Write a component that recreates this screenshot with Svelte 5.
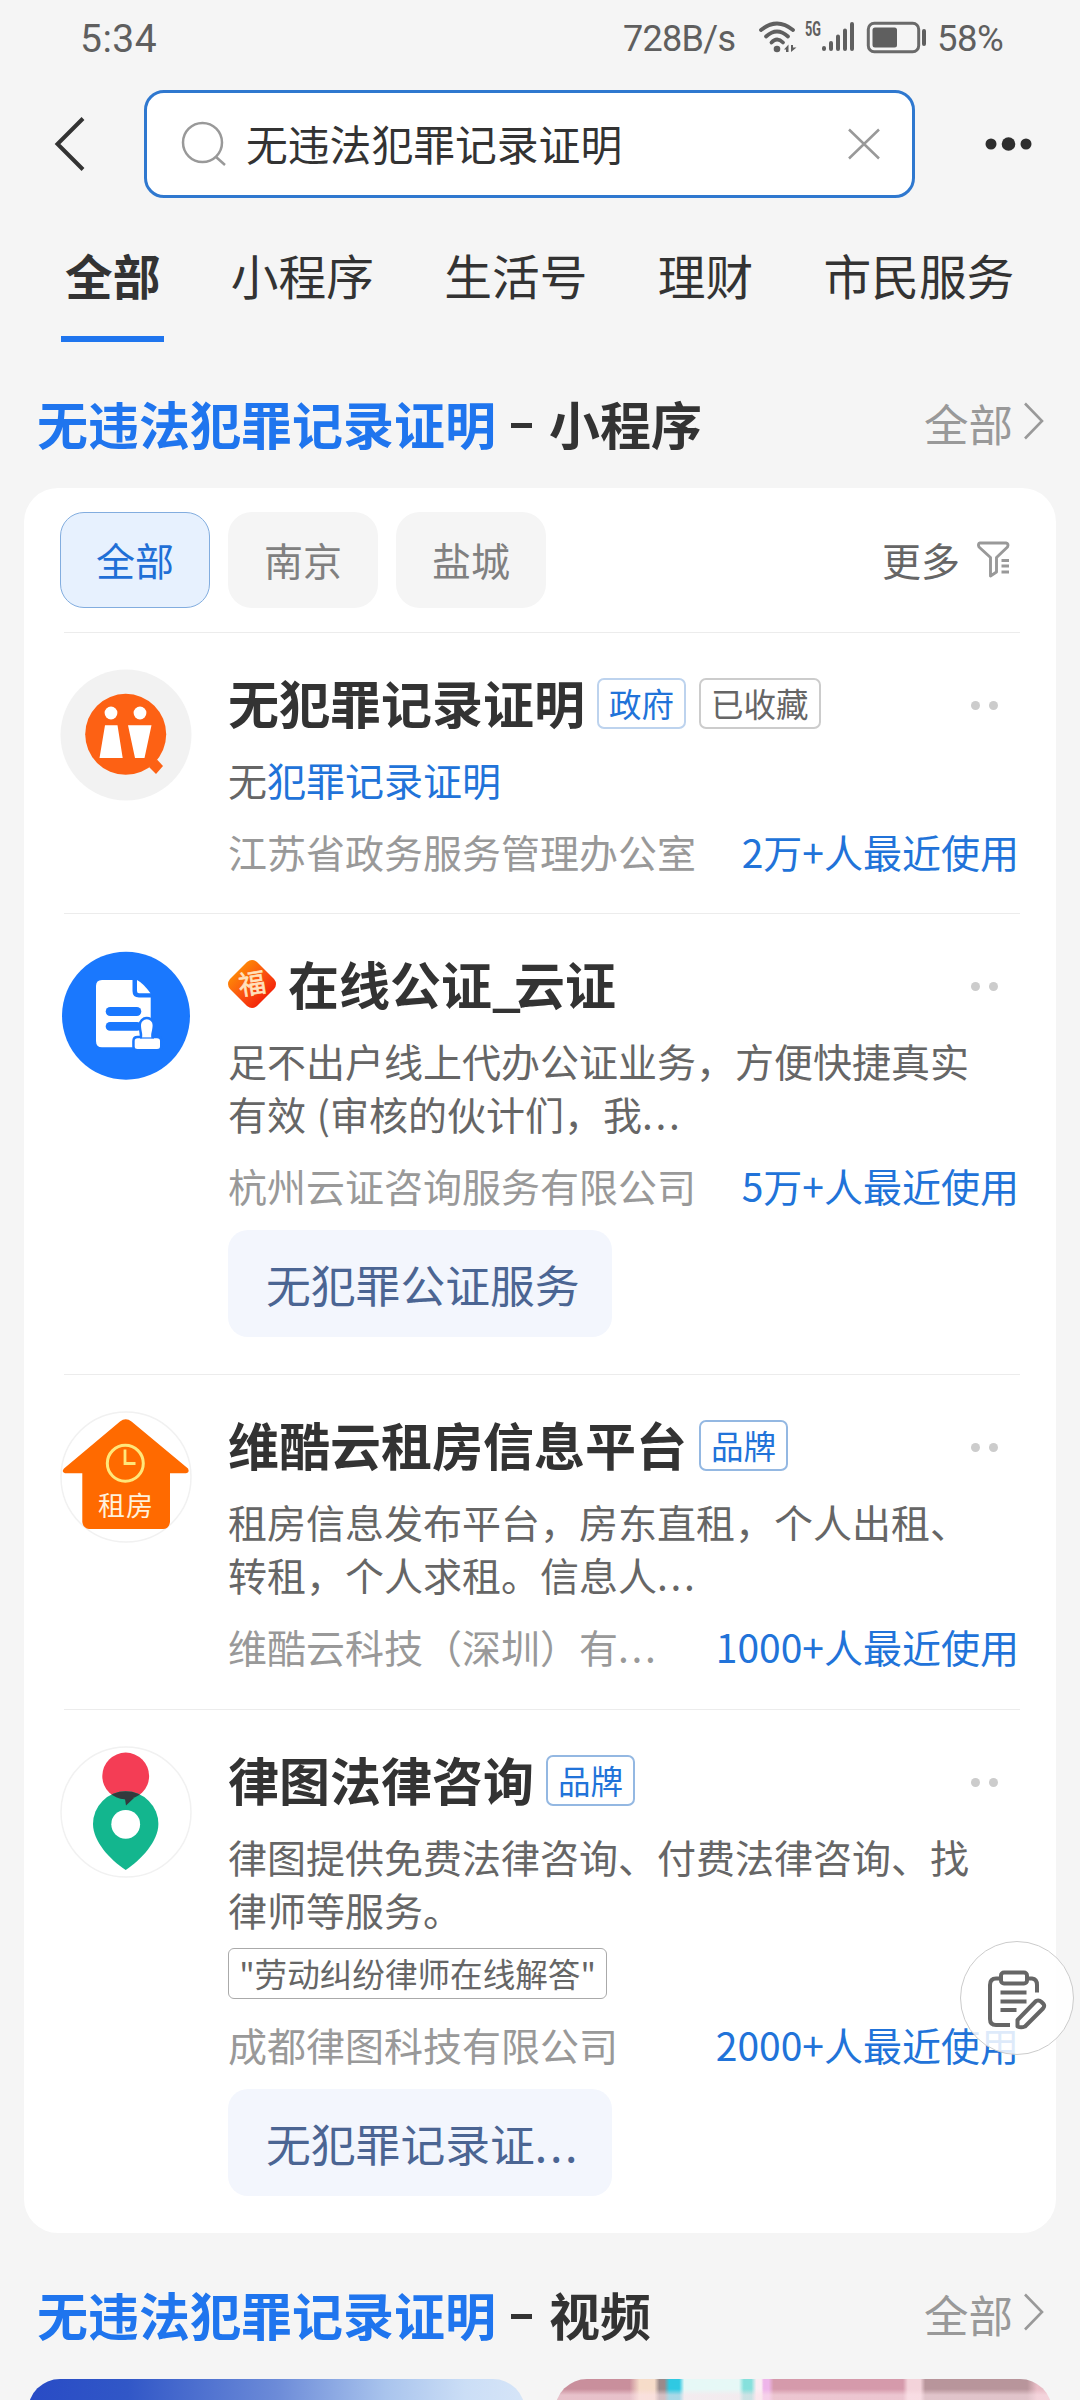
<script>
  const tabs = ['全部', '小程序', '生活号', '理财', '市民服务'];
  const chips = ['全部', '南京', '盐城'];
  const query = '无违法犯罪记录证明';

  const items = [
    {
      icon: 'people',
      title: ['无犯罪记录证明'],
      tags: [{ text: '政府', kind: 'blue' }, { text: '已收藏', kind: 'grey' }],
      lines: [{ text: '无', mark: '犯罪记录证明' }],
      company: '江苏省政务服务管理办公室',
      usage: '2万+人最近使用'
    },
    {
      icon: 'notary',
      emblem: true,
      title: ['在线公证', '_', '云证'],
      tags: [],
      lines: [{ text: '足不出户线上代办公证业务，方便快捷真实' }, { text: '有效 (审核的伙计们，我', more: true }],
      company: '杭州云证咨询服务有限公司',
      usage: '5万+人最近使用',
      action: '无犯罪公证服务'
    },
    {
      icon: 'house',
      title: ['维酷云租房信息平台'],
      tags: [{ text: '品牌', kind: 'brand' }],
      lines: [{ text: '租房信息发布平台，房东直租，个人出租、' }, { text: '转租，个人求租。信息人', more: true }],
      company: '维酷云科技（深圳）有',
      companyMore: true,
      usage: '1000+人最近使用'
    },
    {
      icon: 'pin',
      title: ['律图法律咨询'],
      tags: [{ text: '品牌', kind: 'brand' }],
      lines: [{ text: '律图提供免费法律咨询、付费法律咨询、找' }, { text: '律师等服务。' }],
      quote: '"劳动纠纷律师在线解答"',
      company: '成都律图科技有限公司',
      usage: '2000+人最近使用',
      action: '无犯罪记录证',
      actionMore: true
    }
  ];
</script>

{#snippet sectionHead(name)}
  <div class="section-head">
    <h2><em>{query}</em><i class="dash"></i>{name}</h2>
    <span class="all">全部
      <svg width="23" height="40" viewBox="0 0 23 40"><path d="M3 2.500 L20 20 L3 37.500" fill="none" stroke="#999" stroke-width="2.600" /></svg>
    </span>
  </div>
{/snippet}

{#snippet avatar(kind)}
  <svg class="avatar" width="132" height="132" viewBox="0 0 132 132">
    {#if kind === 'people'}
      <circle cx="66" cy="66" r="65.500" fill="#f2f2f2" />
      <circle cx="65.700" cy="65.300" r="40.500" fill="#fd6114" />
      <path d="M89 98 L97 90.500 L103 97 L96 105 Z" fill="#fd6114" />
      <circle cx="51" cy="44" r="6.400" fill="#fff" />
      <circle cx="80" cy="44" r="6.400" fill="#fff" />
      <path d="M45 56.300 H57.500 L62.700 89 H39.500 Z M68 56.300 H91.500 L84.500 89 H75 Z" fill="#fff" />
    {:else if kind === 'notary'}
      <circle cx="66" cy="65.700" r="64" fill="#1a78fe" />
      <path d="M42 30 H72.500 V41 Q72.500 47.500 79 47.500 H90.700 V97.300 H42 Q36 97.300 36 91 V36 Q36 30 42 30 Z" fill="#fff" />
      <path d="M77 30 Q83 33 90.500 43.300 H79 Q77 43.300 77 41 Z" fill="#fff" />
      <rect x="45.700" y="57" width="35.600" height="9" rx="4.500" fill="#1a78fe" />
      <rect x="45.700" y="72" width="35.600" height="8.700" rx="4.300" fill="#1a78fe" />
      <path d="M82 88.300 C83 83 81 81 81 75 A5.800 5.800 0 0 1 92.600 75 C92.600 81 90.500 83 91.500 88.300 H97 Q100 88.300 100 91 V96.500 Q100 99 97 99 H77.500 Q74.700 99 74.700 96.500 V91 Q74.700 88.300 77.500 88.300 Z" fill="#fff" stroke="#1a78fe" stroke-width="5" paint-order="stroke" />
      <path d="M80 88 H94" stroke="#1a78fe" stroke-width="1.200" />
    {:else if kind === 'house'}
      <circle cx="66" cy="66" r="65" fill="#fff" stroke="#f1f1f1" stroke-width="1.500" />
      <path d="M60 10.500 Q65.700 6 71.500 10.500 L128 57.500 Q130 62 126 62.300 H110 V111 Q109 118 103 118 H29 Q23 117 22.300 111 V62.300 H5 Q1 61 4 57.500 Z" fill="#ff6a00" />
      <circle cx="65.300" cy="52.300" r="18" fill="none" stroke="#ffe77a" stroke-width="3" />
      <path d="M65 38.500 V52.500 H75.500" fill="none" stroke="#ffe77a" stroke-width="2.800" />
      <text x="66" y="105" text-anchor="middle" font-size="27" letter-spacing="1" fill="#fff1dc">租房</text>
    {:else}
      <circle cx="66" cy="66" r="65" fill="#fff" stroke="#f1f1f1" stroke-width="1.500" />
      <clipPath id="head-clip"><circle cx="65.700" cy="30" r="23.400" /></clipPath>
      <circle cx="65.700" cy="30" r="23.400" fill="#f43d55" />
      <path d="M65.700 124 C50 114 33 95 33 78 A32.700 32.700 0 0 1 98.400 78 C98.400 95 81 114 65.700 124 Z" fill="#13b68e" />
      <circle cx="65.700" cy="78" r="32.700" fill="#333a3d" clip-path="url(#head-clip)" />
      <path d="M58 52 H74 L66 59.500 L65 53 Z" fill="#333a3d" />
      <circle cx="65.700" cy="78.300" r="14.400" fill="#fff" />
    {/if}
  </svg>
{/snippet}

<div class="screen">
  <header class="status">
    <span class="clock">5:34</span>
    <span class="speed">728B/s</span>
    <svg class="signals" width="175" height="40" viewBox="0 0 175 40">
      <g fill="none" stroke="#5f5f5f" stroke-width="3.800" stroke-linecap="round">
        <path d="M6 12 Q22 -1 38 12" />
        <path d="M11 18.500 Q22 8.500 33 18.500" />
        <path d="M16.500 24.500 Q22 18.500 28 24.500" />
      </g>
      <circle cx="22" cy="31" r="3.300" fill="#5f5f5f" />
      <path d="M29 31.500 L33.500 26.500 V34 H31 V31.500 Z M36 27 V34 L41.500 29.500 L38 29.500 V27 Z" fill="#5f5f5f" />
      <text class="fiveg" x="50" y="17.500" textLength="16" lengthAdjust="spacingAndGlyphs">5G</text>
      <g stroke="#5f5f5f" stroke-width="4" stroke-linecap="round">
        <path d="M69 30 V31 M76 25 V31 M83 18.500 V31 M90 12.500 V31 M97 6 V31" />
      </g>
      <rect x="113.300" y="5.300" width="50.400" height="28.400" rx="6" fill="none" stroke="#6a6a6a" stroke-width="3" />
      <rect x="117.500" y="9.500" width="24.500" height="20" rx="2.500" fill="#5f5f5f" />
      <rect x="167" y="11" width="4" height="17" rx="2" fill="#5f5f5f" />
    </svg>
    <span class="charge">58%</span>
  </header>

  <div class="search-row">
    <svg class="back" width="40" height="60" viewBox="0 0 40 60"><path d="M33 4.500 L7.500 30 L33 55.500" fill="none" stroke="#333" stroke-width="4" /></svg>
    <div class="search">
      <svg width="50" height="50" viewBox="0 0 50 50"><g fill="none" stroke="#999" stroke-width="2.500"><circle cx="23.500" cy="23.500" r="19.500" /><path d="M36.500 37.500 L46 46" /></g></svg>
      <span class="query">{query}</span>
      <svg class="clear" width="34" height="34" viewBox="0 0 34 34"><path d="M2 2.500 L32 31.500 M32 2.500 L2 31.500" stroke="#999" stroke-width="2.500" /></svg>
    </div>
    <svg class="more-dots" width="50" height="20" viewBox="0 0 50 20"><g fill="#2e2e2e"><circle cx="8" cy="10" r="5.500" /><circle cx="25.500" cy="10" r="6.800" /><circle cx="43" cy="10" r="5.500" /></g></svg>
  </div>

  <nav class="tabs">
    {#each tabs as tab, i}
      <span class:on={i === 0}>{tab}</span>
    {/each}
  </nav>

  {@render sectionHead('小程序')}

  <main class="card">
    <div class="filters">
      {#each chips as chip, i}
        <span class="chip" class:on={i === 0}>{chip}</span>
      {/each}
      <span class="filter-more">更多</span>
      <svg width="36" height="38" viewBox="0 0 36 38">
        <g fill="none" stroke="#999" stroke-width="2.900" stroke-linejoin="round">
          <path d="M4 2 H30 Q33 2.500 31.500 6 L20.500 16.500 V31 L14.500 35 V16.500 L3 6 Q1.500 2.500 4 2 Z" />
          <path d="M25.500 19.500 H33 M25.500 25 H33 M25.500 31 H33" />
        </g>
      </svg>
    </div>

    {#each items as item}
      <article class="item">
        {@render avatar(item.icon)}
        <div class="body">
          <div class="title-row">
            {#if item.emblem}
              <svg class="emblem" width="50" height="50" viewBox="0 0 50 50">
                <defs><linearGradient id="fu" x1="0" y1="0" x2="1" y2="1"><stop offset="0" stop-color="#ffa800" /><stop offset=".5" stop-color="#fb5410" /><stop offset="1" stop-color="#ee0505" /></linearGradient></defs>
                <path d="M20 3 Q25 -1 30 3 L47 20 Q51 25 47 30 L30 47 Q25 51 20 47 L3 30 Q-1 25 3 20 Z" fill="url(#fu)" />
                <text x="25" y="34.500" text-anchor="middle" font-size="27" font-weight="400" fill="#ffe2bd" stroke="#ffe2bd" stroke-width=".6" transform="rotate(-9 25 25)">福</text>
              </svg>
            {/if}
            <h3>{#each item.title as part}<span class:underscore={part === '_'}>{part}</span>{/each}</h3>
            {#each item.tags as tag}
              <span class="tag {tag.kind}">{tag.text}</span>
            {/each}
            <span class="menu"><i></i><i></i></span>
          </div>
          <div class="desc">
            {#each item.lines as line}
              <p>{line.text}{#if line.mark}<em>{line.mark}</em>{/if}{#if line.more}<span class="dots">...</span>{/if}</p>
            {/each}
          </div>
          {#if item.quote}<div class="quote">{item.quote}</div>{/if}
          <div class="meta">
            <span>{item.company}{#if item.companyMore}<span class="dots">...</span>{/if}</span>
            <em>{item.usage}</em>
          </div>
          {#if item.action}
            <div class="action">{item.action}{#if item.actionMore}<span class="dots">...</span>{/if}</div>
          {/if}
        </div>
      </article>
    {/each}
  </main>

  {@render sectionHead('视频')}

  <div class="videos">
    <div class="video sky"></div>
    <div class="video room"></div>
  </div>

  <div class="fab">
    <svg width="66" height="66" viewBox="0 0 66 66">
      <g fill="none" stroke="#666" stroke-width="4">
        <path d="M19 13.500 H14 Q8 13.500 8 20 V54 Q8 60 14 60 H28" />
        <path d="M45 13.500 H50 Q55 14 55 20 V27.500" />
        <rect x="19" y="7.500" width="26" height="11" rx="3" />
        <path d="M18.500 27.500 H44.500 M18.500 36.500 H44.500 M18.500 45 H34.500" />
        <path d="M35.500 61.500 V55 L54 36 Q57 34.500 59.500 37 L61.500 39 Q63 41 61 43.500 L43 61.500 Q39 63 35.500 61.500 Z" stroke-linejoin="round" />
      </g>
    </svg>
  </div>
</div>

<style>
  :global(body) {
    background: #f5f5f5;
  }
  .screen {
    position: relative;
    width: 1080px;
    height: 2400px;
    overflow: hidden;
    background: #f5f5f5;
    color: #333;
    font-family: 'Noto Sans CJK SC', 'Noto Sans', sans-serif;
    white-space: nowrap;
  }
  .screen * {
    box-sizing: border-box;
  }
  em {
    font-style: normal;
  }
  h2,
  h3,
  p {
    margin: 0;
  }
  svg {
    display: block;
    flex: none;
  }

  .status {
    display: flex;
    align-items: center;
    height: 90px;
    padding: 0 0 14px 80px;
    color: #5f5f5f;
    font-family: Roboto, sans-serif;
  }
  .clock {
    width: 543px;
    padding-top: 2px;
    font-size: 39px;
    letter-spacing: 0.500px;
  }
  .speed {
    width: 132px;
    padding-top: 1px;
    font-size: 36px;
    letter-spacing: -0.700px;
  }
  .charge {
    margin-left: 7px;
    padding-top: 1px;
    font-size: 36.500px;
    letter-spacing: -0.500px;
  }
  .fiveg {
    font-size: 19.500px;
    font-weight: 700;
    fill: #5f5f5f;
  }

  .search-row {
    display: flex;
    align-items: center;
    height: 108px;
    padding-left: 50px;
  }
  .search {
    display: flex;
    align-items: center;
    width: 771px;
    height: 108px;
    margin-left: 54px;
    padding: 0 31px 0 32px;
    border: 3px solid #2f78cf;
    border-radius: 20px;
    background: #fff;
  }
  .query {
    flex: 1;
    margin: -3px 0 0 17px;
    font-size: 41.800px;
    line-height: 60px;
  }
  .more-dots {
    margin-left: 68px;
  }

  .tabs {
    display: flex;
    gap: 70.400px;
    height: 144px;
    padding: 47px 0 0 65px;
    font-size: 47.700px;
    line-height: 60px;
  }
  .tabs .on {
    height: 97px;
    margin: 0 -4px;
    padding: 0 4px;
    border-bottom: 6px solid #1f75ee;
    font-weight: 700;
  }

  .section-head {
    display: flex;
    align-items: center;
    justify-content: space-between;
    height: 146px;
    padding: 15px 35px 0 37px;
  }
  h2 {
    display: flex;
    align-items: center;
    font-size: 51px;
    line-height: 60px;
    font-weight: 700;
  }
  h2 em {
    color: #1f75ee;
  }
  .dash {
    width: 21px;
    height: 5px;
    margin: 6px 17px 0 15px;
    background: #333;
  }
  .all {
    display: flex;
    align-items: center;
    gap: 9px;
    color: #999;
    font-size: 44.500px;
    line-height: 60px;
  }
  .all svg {
    margin-top: -3px;
  }

  .card {
    height: 1745px;
    margin: 0 24px;
    padding: 24px 36px 0 40px;
    border-radius: 34px;
    background: #fff;
  }
  .filters {
    display: flex;
    align-items: center;
    height: 96px;
    margin: 0 8px 24px -4px;
  }
  .chip {
    width: 150px;
    height: 96px;
    margin-right: 18px;
    border-radius: 24px;
    background: #f5f5f5;
    color: #808080;
    font-size: 39px;
    line-height: 94px;
    text-align: center;
  }
  .chip.on {
    border: 1px solid #82addf;
    background: #e7f1fe;
    color: #1f6fd6;
    line-height: 92px;
  }
  .filter-more {
    margin: -2px 16px 0 auto;
    color: #666;
    font-size: 39px;
  }

  .item {
    display: flex;
    gap: 36px;
    padding-top: 36px;
    border-top: 1px solid #ececec;
  }
  .avatar {
    margin-left: -4px;
  }
  .body {
    flex: 1;
    min-width: 0;
    padding: 6px 0 36px;
  }
  .item:nth-child(2) .body {
    padding-bottom: 35px;
  }
  .item:nth-child(3) .body {
    padding-bottom: 37px;
  }
  .title-row {
    display: flex;
    align-items: center;
    height: 60px;
  }
  .emblem {
    margin: -4px 11px 0 -1px;
  }
  h3 {
    margin: -6px 12px 0 0;
    font-size: 51px;
    line-height: 60px;
    font-weight: 700;
  }
  .underscore {
    letter-spacing: -7px;
  }
  .tag {
    height: 51px;
    margin: -4px 13px 0 0;
    padding: 0 10px;
    border: 2px solid #bdd3ee;
    border-radius: 7px;
    color: #2173d9;
    font-size: 32.500px;
    line-height: 45px;
  }
  .tag.brand {
    border-color: #94b8e2;
  }
  .tag.grey {
    border-color: #ccc;
    color: #666;
  }
  .menu {
    display: flex;
    gap: 9px;
    margin: 0 22px 0 auto;
  }
  .menu i {
    width: 9px;
    height: 9px;
    border-radius: 50%;
    background: #ccc;
  }
  .desc {
    margin: 18px 0 22px;
    color: #666;
    font-size: 39px;
    line-height: 53px;
    word-spacing: 2px;
  }
  .desc em,
  .meta em {
    color: #2173d9;
  }
  .dots {
    letter-spacing: 2.700px;
  }
  .quote {
    width: 379px;
    height: 51px;
    margin: -10px 0 22px;
    border: 1px solid #aaa;
    border-radius: 6px;
    color: #666;
    font-size: 32.600px;
    line-height: 48px;
    text-align: center;
  }
  .meta {
    display: flex;
    justify-content: space-between;
    height: 50px;
    padding-right: 1px;
    color: #999;
    font-size: 39px;
    line-height: 47px;
  }
  .action {
    width: 384px;
    height: 107px;
    margin-top: 18px;
    padding-left: 38px;
    border-radius: 20px;
    background: #f3f6fd;
    color: #4b6593;
    font-size: 44.800px;
    line-height: 107px;
  }

  .videos {
    display: flex;
    gap: 30px;
    padding-left: 28px;
  }
  .video {
    width: 497px;
    height: 280px;
    border-radius: 32px;
  }
  .sky {
    background: linear-gradient(90deg, #284bc5 0, #3157c7 20%, #6c8bd8 50%, #a9c4ed 72%, #cbdef6 88%, #d6e5f8 100%);
  }
  .room {
    background:
      linear-gradient(180deg, transparent 0 10px, #fbe3ea99 16px 100%),
      linear-gradient(90deg, #c98f9c 0 15%, #f6dcc9 17% 20%, #9a8a8a 21% 22%, #2fc9e2 23% 25%, #e6f8f6 26% 37%, #86e0dc 38% 39.500%, #fbeef3 40.500% 41.500%, #eeb5ea 42% 43%, #d59aab 44% 70%, #f3d3da 71% 73.500%, #b8959b 74.500% 95%, #e8bcc5 97%);
  }

  .fab {
    position: absolute;
    left: 960px;
    top: 1941px;
    display: flex;
    align-items: center;
    justify-content: center;
    width: 114px;
    height: 114px;
    padding-right: 4px;
    border: 1.500px solid #ccc;
    border-radius: 50%;
    background: rgba(255, 255, 255, 0.85);
  }
</style>
